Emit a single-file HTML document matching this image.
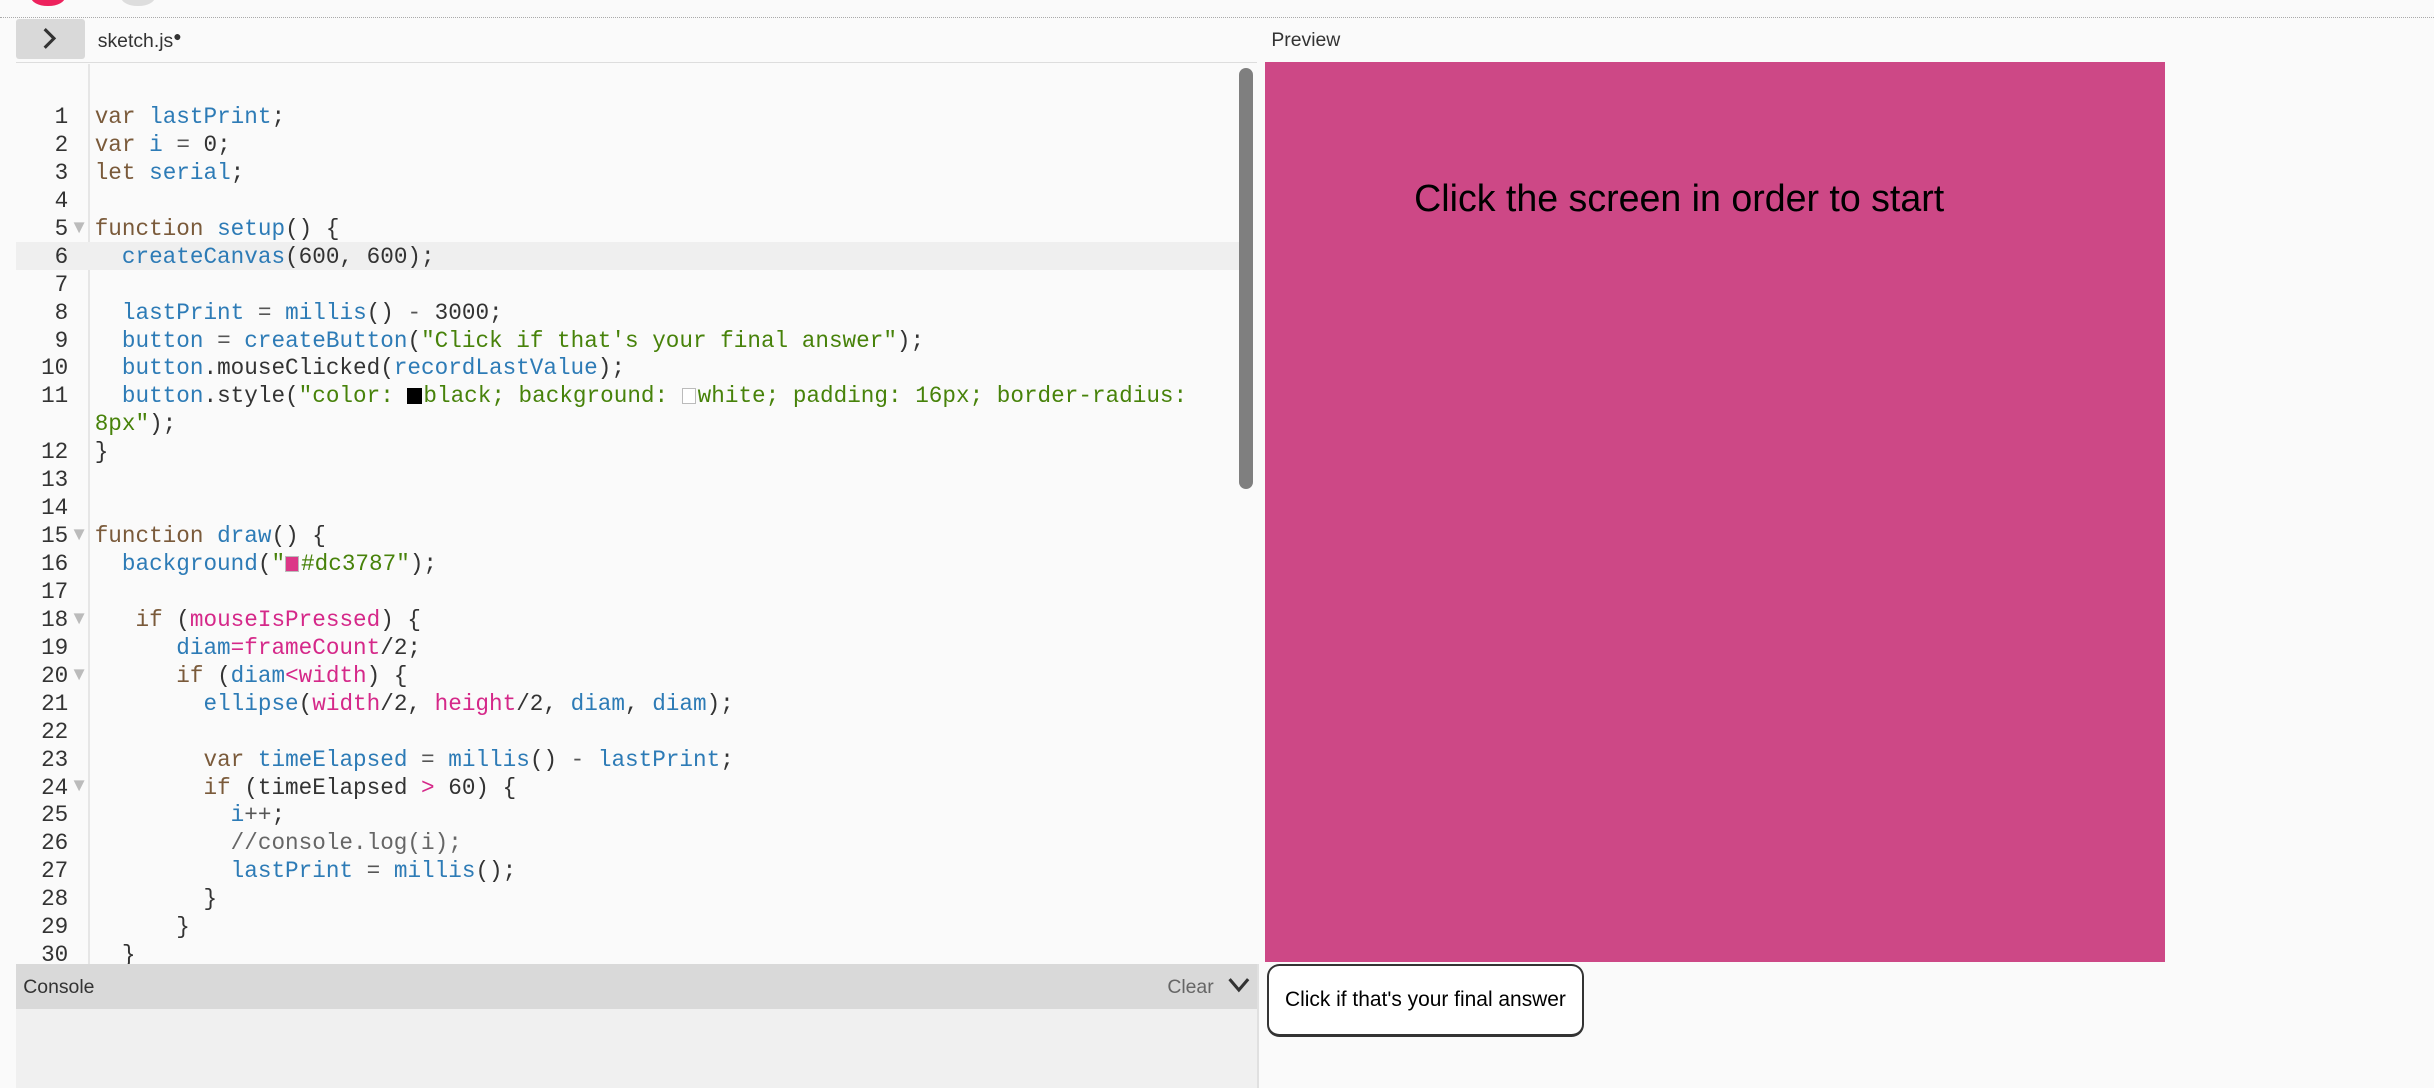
<!DOCTYPE html>
<html><head><meta charset="utf-8"><style>
html,body{margin:0;padding:0;}
body{width:1568px;height:701px;zoom:1.5523;background:#fafafa;position:relative;overflow:hidden;font-family:"Liberation Sans",sans-serif;}
.abs{position:absolute;}
.code{font-family:"Liberation Mono",monospace;font-size:14.6px;line-height:18px;white-space:pre;color:#333;}
.ln{position:absolute;left:10px;width:34px;text-align:right;color:#333;font-family:"Liberation Mono",monospace;font-size:14.6px;line-height:18px;}
.k{color:#7a5a3a}.v{color:#2d7bb6}.s{color:#47820a}.p{color:#d52889}.c{color:#666}.o{color:#555}
.fold{position:absolute;left:45px;color:#bbb;font-size:12px;line-height:18px;}
.sw{display:inline-block;width:8px;height:9px;border:1px solid #bbb;vertical-align:-1px;margin-right:1px;}
</style></head><body>
<div class="abs" style="left:20px;top:-8px;width:22px;height:12px;border-radius:50%;background:#ed225d"></div>
<div class="abs" style="left:78px;top:-8px;width:22px;height:12px;border-radius:50%;background:#ddd"></div>
<div class="abs" style="left:0;top:11px;width:1568px;border-top:1px dotted #aaa"></div>
<div class="abs" style="left:10px;top:12px;width:45px;height:26px;background:#d9d9d9;border-radius:2px"></div>
<svg class="abs" style="left:26px;top:17px" width="12" height="16" viewBox="0 0 12 16"><path d="M3 2 L9 8 L3 14" fill="none" stroke="#333" stroke-width="2"/></svg>
<div class="abs" style="left:63px;top:18px;font-size:12.5px;color:#333">sketch.js<span style="font-size:9px;vertical-align:4px">●</span></div>
<div class="abs" style="left:819px;top:19px;font-size:12.5px;color:#333">Preview</div>
<div class="abs" style="left:10px;top:40px;width:800px;height:581px;background:#fafafa;border-top:1px solid #ddd"></div>
<div class="abs" style="left:57px;top:41px;width:1px;height:580px;background:#e6e6e6"></div>
<div class="abs" style="left:10px;top:156px;width:788px;height:18px;background:#efefef"></div>
<div class="abs" style="left:798px;top:44px;width:9px;height:271px;background:#7f7f7f;border-radius:5px"></div>
<div class="abs" style="left:0;top:0">
<div class="ln" style="top:67px">1<br>2<br>3<br>4<br>5<br>6<br>7<br>8<br>9<br>10<br>11<br><br>12<br>13<br>14<br>15<br>16<br>17<br>18<br>19<br>20<br>21<br>22<br>23<br>24<br>25<br>26<br>27<br>28<br>29<br>30</div>
<div class="fold" style="top:137px">▼</div><div class="fold" style="top:335px">▼</div><div class="fold" style="top:389px">▼</div><div class="fold" style="top:425px">▼</div><div class="fold" style="top:497px">▼</div>
</div>
<div class="abs code" style="left:61px;top:67px;height:554px;overflow:hidden;width:737px"><span class="k">var</span> <span class="v">lastPrint</span>;
<span class="k">var</span> <span class="v">i</span> <span class="o">=</span> 0;
<span class="k">let</span> <span class="v">serial</span>;

<span class="k">function</span> <span class="v">setup</span>() {
  <span class="v">createCanvas</span>(600, 600);

  <span class="v">lastPrint</span> <span class="o">=</span> <span class="v">millis</span>() <span class="o">-</span> 3000;
  <span class="v">button</span> <span class="o">=</span> <span class="v">createButton</span>(<span class="s">"Click if that's your final answer"</span>);
  <span class="v">button</span>.mouseClicked(<span class="v">recordLastValue</span>);
  <span class="v">button</span>.style(<span class="s">"color: <span class="sw" style="background:#000;border-color:#000"></span>black; background: <span class="sw" style="background:#fff"></span>white; padding: 16px; border-radius:</span>
<span class="s">8px"</span>);
}


<span class="k">function</span> <span class="v">draw</span>() {
  <span class="v">background</span>(<span class="s">"<span class="sw" style="background:#dc3787"></span>#dc3787"</span>);

   <span class="k">if</span> (<span class="p">mouseIsPressed</span>) {
      <span class="v">diam</span><span class="p">=</span><span class="p">frameCount</span>/2;
      <span class="k">if</span> (<span class="v">diam</span><span class="p">&lt;</span><span class="p">width</span>) {
        <span class="v">ellipse</span>(<span class="p">width</span>/2, <span class="p">height</span>/2, <span class="v">diam</span>, <span class="v">diam</span>);

        <span class="k">var</span> <span class="v">timeElapsed</span> <span class="o">=</span> <span class="v">millis</span>() <span class="o">-</span> <span class="v">lastPrint</span>;
        <span class="k">if</span> (timeElapsed <span class="p">&gt;</span> 60) {
          <span class="v">i</span><span class="o">++</span>;
          <span class="c">//console.log(i);</span>
          <span class="v">lastPrint</span> <span class="o">=</span> <span class="v">millis</span>();
        }
      }
  }</div>
<div class="abs" style="left:10px;top:621px;width:800px;height:29px;background:#d9d9d9"></div>
<div class="abs" style="left:15px;top:629px;font-size:12.5px;color:#333">Console</div>
<div class="abs" style="left:752px;top:629px;font-size:12.5px;color:#666">Clear</div>
<svg class="abs" style="left:791px;top:629px" width="14" height="12" viewBox="0 0 14 12"><path d="M1 2 L7 9 L13 2" fill="none" stroke="#333" stroke-width="2"/></svg>
<div class="abs" style="left:10px;top:650px;width:800px;height:51px;background:#f0f0f0"></div>
<div class="abs" style="left:810px;top:621px;width:1px;height:80px;background:#e0e0e0"></div>
<div class="abs" style="left:815px;top:40px;width:580px;height:580px;background:#cd4886"></div>
<div class="abs" style="left:911px;top:114px;font-size:24.2px;color:#000">Click the screen in order to start</div>
<div class="abs" style="left:816px;top:621px;height:44px;background:#fff;border:1.5px solid #333;border-bottom-width:2.5px;border-radius:8px;width:202px;font-size:13.5px;color:#000;line-height:44px;text-align:center">Click if that's your final answer</div>
</body></html>
